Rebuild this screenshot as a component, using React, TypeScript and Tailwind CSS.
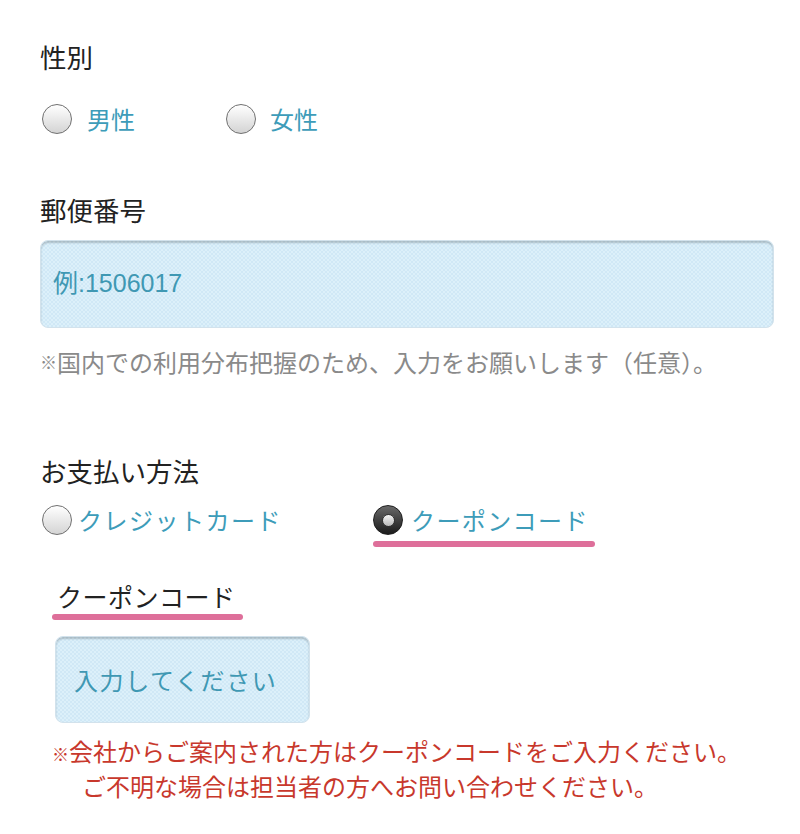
import React from "react";

const font = "font-['Noto_Sans_CJK_JP','Noto_Sans',sans-serif]";

function Radio({ checked }: { checked?: boolean }) {
  if (checked) {
    return (
      <span className="flex h-[30px] w-[30px] shrink-0 items-center justify-center rounded-full border border-[#1e1e1e] bg-linear-to-b from-[#6a6a6a] to-[#1c1c1c]">
        <span className="h-[13px] w-[13px] rounded-full border border-[#333] bg-linear-to-b from-[#f4f4f4] to-[#b9b9b9]" />
      </span>
    );
  }
  return (
    <span className="h-[30px] w-[30px] shrink-0 rounded-full border-[1.5px] border-[#707070] bg-linear-to-b from-white to-[#d4d4d4]" />
  );
}

const inputBg =
  "bg-[#d6ecf8] bg-[image:repeating-conic-gradient(#d0e8f6_0_25%,#dcf0fa_0_50%)] bg-[length:4px_4px] shadow-[inset_0_2px_2px_rgba(0,0,0,0.2)] border border-[#d2e2ec]";

export default function App() {
  return (
    <div className={`${font} min-h-[834px] w-[800px] bg-white pl-[40px] pt-[40px] text-[#222]`}>
      {/* 性別 */}
      <div className="flex h-[34px] items-center text-[26.5px]">性別</div>
      <div className="mt-[28px] ml-[2px] flex h-[34px] items-center">
        <div className="flex w-[184px] items-center gap-[15px]">
          <Radio />
          <span className="text-[24px] text-[#3d9cb9]">男性</span>
        </div>
        <div className="flex items-center gap-[14px]">
          <Radio />
          <span className="text-[24px] text-[#3d9cb9]">女性</span>
        </div>
      </div>

      {/* 郵便番号 */}
      <div className="mt-[57px] flex h-[34px] items-center text-[26.5px]">郵便番号</div>
      <div
        className={`mt-[13px] flex h-[88px] w-[734px] items-center rounded-[8px] pl-[12px] ${inputBg}`}
      >
        <span className="font-['Liberation_Sans','Noto_Sans_CJK_JP',sans-serif] text-[25px] text-[#3f98b3]">
          例:1506017
        </span>
      </div>
      <div className="mt-[19px] flex h-[30px] items-center text-[24px] text-[#8a8a8a]">
        <span className="text-[17px]">※</span>国内での利用分布把握のため、入力をお願いします（任意）。
      </div>

      {/* お支払い方法 */}
      <div className="mt-[77px] flex h-[34px] items-center text-[26.5px]">お支払い方法</div>
      <div className="mt-[15px] ml-[2px] flex items-start">
        <div className="flex h-[34px] w-[331px] items-center gap-[6px]">
          <Radio />
          <span className="text-[24px] tracking-[1.5px] text-[#3d9cb9]">クレジットカード</span>
        </div>
        <div className="flex flex-col">
          <div className="flex h-[34px] items-center gap-[8px]">
            <Radio checked />
            <span className="text-[24px] tracking-[1.4px] text-[#3d9cb9]">クーポンコード</span>
          </div>
          <div className="mt-[4px] h-[6px] w-[222px] rounded-full bg-[#de6f9a]" />
        </div>
      </div>

      {/* クーポンコード */}
      <div className="mt-[35px] ml-[12px] flex w-[191px] flex-col">
        <div className="flex h-[30px] items-center pl-[5px] text-[25px] tracking-[0.5px]">クーポンコード</div>
        <div className="mt-[2px] h-[6px] w-full rounded-full bg-[#de6f9a]" />
      </div>
      <div
        className={`mt-[16px] ml-[15px] flex h-[87px] w-[255px] items-center rounded-[8px] pl-[18px] ${inputBg}`}
      >
        <span className="text-[24px] tracking-[1.6px] text-[#3f98b3]">入力してください</span>
      </div>

      <div className="mt-[12px] ml-[12px] text-[24px] leading-[32px] text-[#c8382c]">
        <div>
          <span className="text-[17px]">※</span>会社からご案内された方はクーポンコードをご入力ください。
        </div>
        <div className="pl-[30px]">ご不明な場合は担当者の方へお問い合わせください。</div>
      </div>
    </div>
  );
}
